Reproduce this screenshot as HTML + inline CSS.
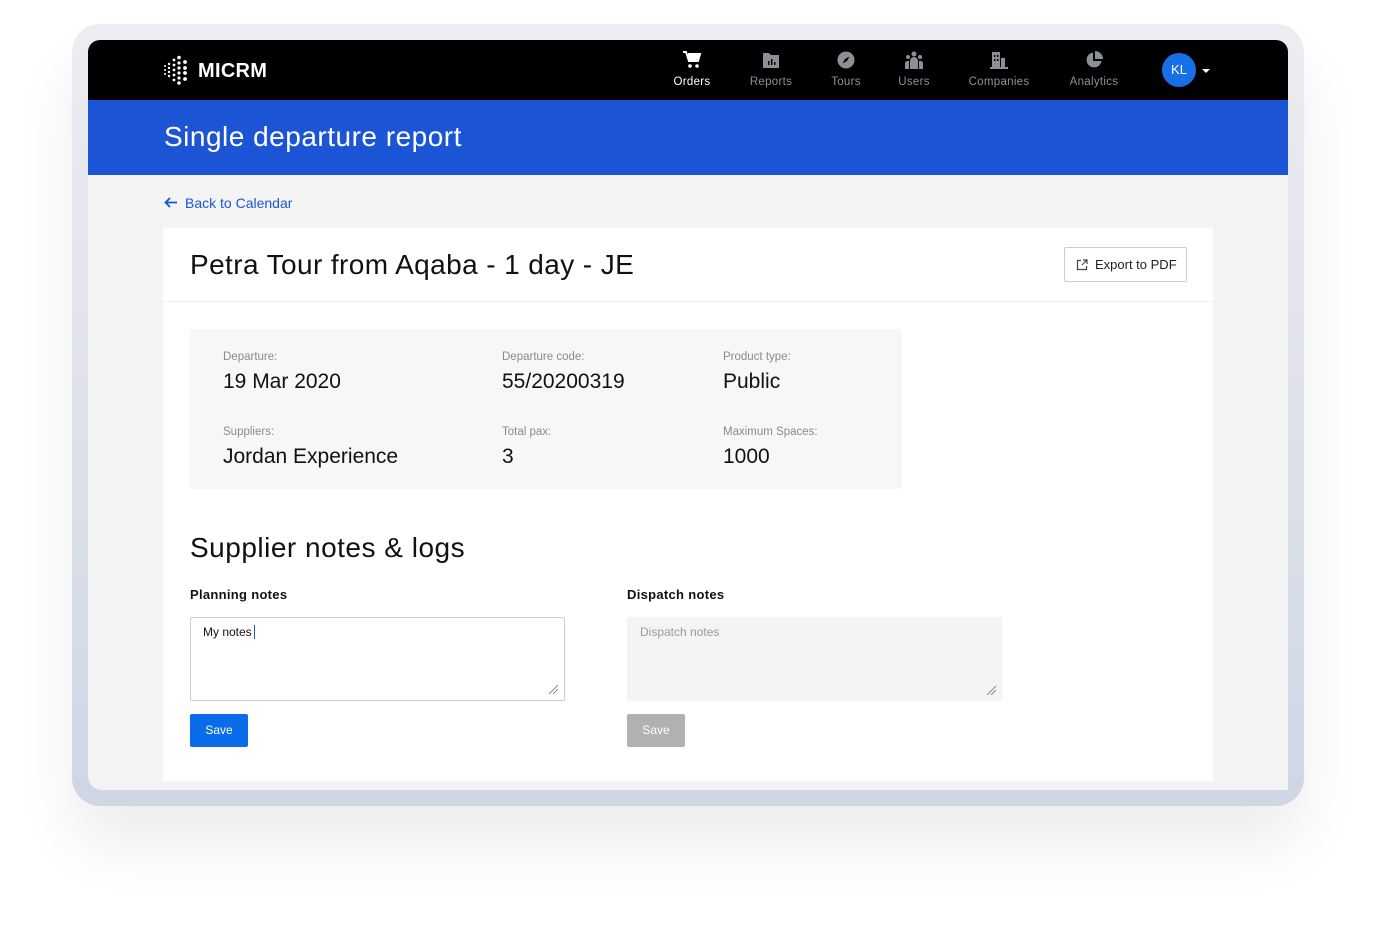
<!DOCTYPE html>
<html><head><meta charset="utf-8"><style>
*{margin:0;padding:0;box-sizing:border-box}
body{width:1376px;height:926px;background:#fff;position:relative;overflow:hidden;font-family:"Liberation Sans",sans-serif}
.abs{position:absolute}
.frame{left:72px;top:24px;width:1232px;height:782px;border-radius:28px;background:linear-gradient(#ecedf2,#cfd6e4);box-shadow:0 40px 60px rgba(0,0,0,0.07)}
.screen{left:88px;top:40px;width:1200px;height:750px;background:#f4f4f4;border-radius:12px 12px 0 14px;overflow:hidden}
.nav{left:0;top:0;width:1200px;height:60px;background:#000}
.banner{left:0;top:60px;width:1200px;height:75px;background:#1b55d6}
.ni{position:absolute;top:11px;text-align:center;font-size:11.5px;color:#8b8f98;letter-spacing:.3px}
.ni svg{display:block;margin:0 auto 7px}
.card{left:75px;top:188px;width:1050px;height:553px;background:#fff}
.lbl{font-size:11.5px;color:#8a8a8a}
.val{font-size:21px;color:#111;margin-top:7px}
</style></head><body>
<div class="abs frame"></div>
<div class="abs screen">
 <div class="abs nav">
  <svg class="abs" style="left:74px;top:15px" width="28" height="30" viewBox="0 0 28 30" fill="#fff">
   <circle cx="3" cy="11" r="1"/><circle cx="3" cy="15" r="1"/><circle cx="3" cy="19" r="1"/>
   <circle cx="7" cy="9" r="1.2"/><circle cx="7" cy="13" r="1.2"/><circle cx="7" cy="17" r="1.2"/><circle cx="7" cy="21" r="1.2"/>
   <circle cx="12" cy="5" r="1.4"/><circle cx="12" cy="10" r="1.4"/><circle cx="12" cy="15" r="1.4"/><circle cx="12" cy="20" r="1.4"/><circle cx="12" cy="25" r="1.4"/>
   <circle cx="17" cy="2.5" r="1.8"/><circle cx="17" cy="8" r="1.6"/><circle cx="17" cy="13" r="1.6"/><circle cx="17" cy="18" r="1.6"/><circle cx="17" cy="23" r="1.6"/><circle cx="17" cy="28" r="1.8"/>
   <circle cx="23" cy="7" r="1.9"/><circle cx="23" cy="13" r="1.9"/><circle cx="23" cy="18" r="1.9"/><circle cx="23" cy="24" r="1.9"/>
  </svg>
  <div class="abs" style="left:110px;top:20px;color:#fff;font-size:20px;font-weight:bold;letter-spacing:.3px">MICRM</div>
  <div class="ni" style="left:584px;width:40px;color:#fff"><svg width="20" height="18" viewBox="0 0 20 18" fill="#fff"><path d="M1 1h3l3 9h9l2-7H6" stroke="#fff" stroke-width="2" fill="none"/><rect x="6" y="4" width="11" height="6"/><circle cx="8" cy="15" r="1.8"/><circle cx="15" cy="15" r="1.8"/></svg>Orders</div>
  <div class="ni" style="left:658px;width:50px"><svg width="18" height="18" viewBox="0 0 18 18"><path d="M1 2h6l2 2h8v13H1z" fill="#8b8f98"/><rect x="6" y="10" width="1.5" height="4" fill="#000"/><rect x="9" y="8" width="1.5" height="6" fill="#000"/><rect x="12" y="11" width="1.5" height="3" fill="#000"/></svg>Reports</div>
  <div class="ni" style="left:740px;width:36px"><svg width="18" height="18" viewBox="0 0 18 18"><circle cx="9" cy="9" r="8.5" fill="#8b8f98"/><path d="M12.5 5.5L10 10 5.5 12.5 8 8z" fill="#000"/></svg>Tours</div>
  <div class="ni" style="left:808px;width:36px"><svg width="20" height="18" viewBox="0 0 20 18" fill="#8b8f98"><circle cx="10" cy="3" r="2.5"/><circle cx="4" cy="6" r="2"/><circle cx="16" cy="6" r="2"/><path d="M6 18v-8a4 4 0 018 0v8z"/><path d="M1 18v-6a3 3 0 014-2v8zM19 18v-6a3 3 0 00-4-2v8z"/></svg>Users</div>
  <div class="ni" style="left:878px;width:66px"><svg width="20" height="18" viewBox="0 0 20 18" fill="#8b8f98"><path d="M3 1h8v16H3z"/><path d="M12 7h4v10h-4z"/><rect x="1" y="16" width="18" height="2"/><rect x="5" y="4" width="1.5" height="2" fill="#000"/><rect x="8" y="4" width="1.5" height="2" fill="#000"/><rect x="5" y="8" width="1.5" height="2" fill="#000"/><rect x="8" y="8" width="1.5" height="2" fill="#000"/></svg>Companies</div>
  <div class="ni" style="left:977px;width:58px"><svg width="18" height="18" viewBox="0 0 18 18" fill="#8b8f98"><path d="M8 1.5A7.5 7.5 0 1016.5 10H8z"/><path d="M10 0a8 8 0 018 8h-8z"/></svg>Analytics</div>
  <div class="abs" style="left:1074px;top:13px;width:34px;height:34px;border-radius:50%;background:#1770e6;color:#fff;font-size:13px;line-height:34px;text-align:center">KL</div>
  <div class="abs" style="left:1114px;top:29px;border-left:4px solid transparent;border-right:4px solid transparent;border-top:4px solid #fff"></div>
 </div>
 <div class="abs banner"><div class="abs" style="left:76px;top:21px;color:#fff;font-size:28px;letter-spacing:.5px">Single departure report</div></div>
 <svg class="abs" style="left:76px;top:157px" width="13" height="11" viewBox="0 0 13 11" fill="none" stroke="#1b55d6" stroke-width="1.8"><path d="M13 5.5H2M6 1L1.5 5.5 6 10"/></svg>
 <div class="abs" style="left:97px;top:155px;color:#1b55d6;font-size:14px">Back to Calendar</div>
 <div class="abs card">
  <div class="abs" style="left:27px;top:21px;font-size:28px;color:#111;letter-spacing:.4px">Petra Tour from Aqaba - 1 day - JE</div>
  <div class="abs" style="left:901px;top:19px;width:123px;height:35px;border:1px solid #ccc;border-radius:2px;font-size:13px;color:#222;line-height:33px;padding-left:30px">Export to PDF
   <svg class="abs" style="left:11px;top:11px" width="12" height="12" viewBox="0 0 12 12" fill="none" stroke="#444" stroke-width="1.2"><path d="M5 1.5H1.5v9h9V7M7 1h4v4M11 1L6 6"/></svg></div>
  <div class="abs" style="left:0;top:73px;width:1050px;height:1px;background:#eee"></div>
  <div class="abs" style="left:27px;top:101px;width:712px;height:160px;background:#f7f7f7;border-radius:3px">
   <div class="abs" style="left:33px;top:22px"><div class="lbl">Departure:</div><div class="val">19 Mar 2020</div></div>
   <div class="abs" style="left:312px;top:22px"><div class="lbl">Departure code:</div><div class="val">55/20200319</div></div>
   <div class="abs" style="left:533px;top:22px"><div class="lbl">Product type:</div><div class="val">Public</div></div>
   <div class="abs" style="left:33px;top:97px"><div class="lbl">Suppliers:</div><div class="val">Jordan Experience</div></div>
   <div class="abs" style="left:312px;top:97px"><div class="lbl">Total pax:</div><div class="val">3</div></div>
   <div class="abs" style="left:533px;top:97px"><div class="lbl">Maximum Spaces:</div><div class="val">1000</div></div>
  </div>
  <div class="abs" style="left:27px;top:304px;font-size:28px;color:#111;letter-spacing:.5px">Supplier notes &amp; logs</div>
  <div class="abs" style="left:27px;top:359px;font-size:13px;color:#111;font-weight:bold;letter-spacing:.3px">Planning notes</div>
  <div class="abs" style="left:464px;top:359px;font-size:13px;color:#111;font-weight:bold;letter-spacing:.3px">Dispatch notes</div>
  <div class="abs" style="left:27px;top:389px;width:375px;height:84px;border:1px solid #ccc;border-radius:2px;font-size:12px;color:#111;padding:7px 12px">My notes <span style="border-left:1px solid #1b55d6;margin-left:2px"></span>
   <svg class="abs" style="right:6px;bottom:6px" width="10" height="10" viewBox="0 0 10 10" stroke="#888"><path d="M1 10L10 1M5 10L10 5"/></svg></div>
  <div class="abs" style="left:464px;top:389px;width:375px;height:84px;background:#f4f4f4;border-radius:2px;font-size:12px;color:#999;padding:8px 13px">Dispatch notes
   <svg class="abs" style="right:6px;bottom:6px" width="10" height="10" viewBox="0 0 10 10" stroke="#888"><path d="M1 10L10 1M5 10L10 5"/></svg></div>
  <div class="abs" style="left:27px;top:486px;width:58px;height:33px;background:#0a6ce8;border-radius:2px;color:#fff;font-size:12px;line-height:33px;text-align:center">Save</div>
  <div class="abs" style="left:464px;top:486px;width:58px;height:33px;background:#b1b1b3;border-radius:2px;color:#fff;font-size:12px;line-height:33px;text-align:center">Save</div>
 </div>
</div>
</body></html>
